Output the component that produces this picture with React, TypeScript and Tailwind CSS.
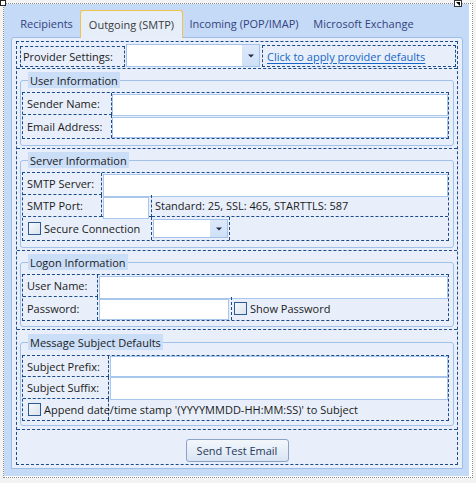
import type { ReactNode } from 'react'

// designer-style dashed outline used by the layout panels
const DASH = 'border-dashed border-[#1d4b88]'

function TextBox({ className = '' }: { className?: string }) {
  return <div className={`bg-white border border-[#a9c6ec] ${className}`} />
}

function Combo({ className = '' }: { className?: string }) {
  return (
    <div className={`flex bg-white border border-[#a3c1ea] ${className}`}>
      <div className="ml-auto w-[17px] h-full bg-gradient-to-b from-[#dde9f9] to-[#cfe0f6] flex items-center justify-center">
        <svg width="6" height="4" viewBox="0 0 6 4">
          <path d="M0 0.5h6L3 3.5z" fill="#1e2d4d" />
        </svg>
      </div>
    </div>
  )
}

function CheckBox() {
  return (
    <span className="inline-block w-[13px] h-[13px] shrink-0 border border-[#2c5a93] bg-gradient-to-br from-[#f6f8fb] to-[#dbe3ee]" />
  )
}

function Label({ children, className = '' }: { children: ReactNode; className?: string }) {
  return (
    <div className={`flex items-center pl-[4px] whitespace-nowrap ${DASH} ${className}`}>{children}</div>
  )
}

function Group({
  title,
  top,
  height,
  children,
}: {
  title: string
  top: string
  height: string
  children: ReactNode
}) {
  return (
    <div className={`relative ml-[3px] w-[434px] border border-[#a2c1e9] rounded-[3px] ${top} ${height}`}>
      <div className="absolute left-[7px] top-[-9px] h-[16px] px-[2px] flex items-center bg-[#cbdef8] whitespace-nowrap">
        {title}
      </div>
      {children}
    </div>
  )
}

const TABS = [
  { label: 'Recipients', w: 'w-[67px]' },
  { label: 'Outgoing (SMTP)', w: 'w-[103px]', active: true },
  { label: 'Incoming (POP/IMAP)', w: 'w-[122px]' },
  { label: 'Microsoft Exchange', w: 'w-[117px]' },
]

export default function App() {
  return (
    <div className="relative w-[476px] h-[483px] bg-[#f3f3f3] font-['Open_Sans',sans-serif] text-[11px] leading-[15px] text-[#1b1b1b] overflow-hidden">
      {/* selection handle and smart-tag glyph */}
      <div className="absolute left-0 top-0 w-[6px] h-[6px] bg-white border border-[#222] z-20" />
      <div className="absolute left-[454px] top-0 w-[8px] h-[7px] bg-white border border-[#333] z-20 flex items-center justify-center">
        <svg width="4" height="4" viewBox="0 0 4 4">
          <path d="M0 0h4v4z" fill="#000" />
        </svg>
      </div>

      <div className="ml-[3px] mt-[3px] w-[470px] h-[475px] border border-dotted border-[#8a8a8a] bg-white">
        <div className="w-[465px] h-[472px] bg-[#c4daf7] pl-[7px] pt-[6px]">
          {/* tab strip */}
          <div className="flex items-end h-[27px] pl-[2px]">
            {TABS.map((t) =>
              t.active ? (
                <div
                  key={t.label}
                  className={`${t.w} h-[28px] -mb-px relative z-10 flex items-center justify-center rounded-t-[3px] border border-b-0 border-[#f0c24e] bg-[#e6eefa] text-[#3a3a3a]`}
                >
                  {t.label}
                </div>
              ) : (
                <div key={t.label} className={`${t.w} h-[27px] flex items-center justify-center text-[#34427e]`}>
                  {t.label}
                </div>
              ),
            )}
          </div>

          {/* tab page */}
          <div className="w-[452px] h-[432px] border border-[#9dbde7] rounded-t-[3px] bg-[#e8effa] pl-[4px] pt-[3px]">
            <div className={`w-[442px] h-[424px] border ${DASH} flex flex-col`}>
              {/* provider row */}
              <div className="h-[26px] flex items-end pl-[3px] pb-[1px]">
                <div className={`w-[105px] h-[21px] border ${DASH} flex items-center pl-[2px] whitespace-nowrap`}>
                  Provider Settings:
                </div>
                <Combo className="ml-px w-[134px] h-[23px]" />
                <div className={`ml-[2px] w-[194px] h-[22px] border ${DASH} flex items-center pl-[4px]`}>
                  <span className="text-[#1467c9] underline underline-offset-[2px] whitespace-nowrap">
                    Click to apply provider defaults
                  </span>
                </div>
              </div>

              {/* user information */}
              <div className={`h-[80px] border-t ${DASH}`}>
                <Group title="User Information" top="mt-[11px]" height="h-[66px]">
                  <div className={`ml-px mt-[11px] w-[427px] h-[47px] border ${DASH} grid grid-cols-[89px_336px] grid-rows-[22px_23px]`}>
                    <Label className="border-r border-b">Sender Name:</Label>
                    <div>
                      <TextBox className="mt-px h-[22px]" />
                    </div>
                    <Label className="border-r">Email Address:</Label>
                    <div>
                      <TextBox className="mt-[2px] h-[21px]" />
                    </div>
                  </div>
                </Group>
              </div>

              {/* server information */}
              <div className={`h-[102px] border-t ${DASH}`}>
                <Group title="Server Information" top="mt-[11px]" height="h-[88px]">
                  <div className={`ml-px mt-[11px] w-[427px] h-[69px] border ${DASH} grid grid-cols-[79px_50px_78px_218px] grid-rows-[22px_22px_23px]`}>
                    <Label className="border-r border-b">SMTP Server:</Label>
                    <div className="col-span-3">
                      <TextBox className="ml-px mt-px w-[345px] h-[23px]" />
                    </div>
                    <Label className="border-r border-b">SMTP Port:</Label>
                    <div className={`border-r border-b ${DASH}`}>
                      <TextBox className="ml-px mt-[2px] w-[46px] h-[22px]" />
                    </div>
                    <div className={`col-span-2 border-b ${DASH} flex items-center pl-[3px] whitespace-nowrap`}>
                      Standard: 25, SSL: 465, STARTTLS: 587
                    </div>
                    <div className={`col-span-2 border-r ${DASH} flex items-center gap-[3px] pl-[5px] whitespace-nowrap`}>
                      <CheckBox />
                      Secure Connection
                    </div>
                    <div className={`border-r ${DASH}`}>
                      <Combo className="ml-px mt-[2px] w-[75px] h-[19px]" />
                    </div>
                    <div />
                  </div>
                </Group>
              </div>

              {/* logon information */}
              <div className={`h-[79px] border-t ${DASH}`}>
                <Group title="Logon Information" top="mt-[11px]" height="h-[65px]">
                  <div className={`ml-px mt-[11px] w-[427px] h-[47px] border ${DASH} grid grid-cols-[75px_134px_216px] grid-rows-[22px_23px]`}>
                    <Label className="border-r border-b">User Name:</Label>
                    <div className="col-span-2">
                      <TextBox className="ml-px mt-px w-[349px] h-[23px]" />
                    </div>
                    <Label className="border-r">Password:</Label>
                    <div className={`border-r ${DASH}`}>
                      <TextBox className="ml-px mt-[2px] w-[130px] h-[21px]" />
                    </div>
                    <div className="flex items-center gap-[3px] pl-[2px] whitespace-nowrap">
                      <CheckBox />
                      Show Password
                    </div>
                  </div>
                </Group>
              </div>

              {/* message subject defaults */}
              <div className={`h-[100px] border-t ${DASH}`}>
                <Group title="Message Subject Defaults" top="mt-[12px]" height="h-[84px]">
                  <div className={`ml-px mt-[12px] w-[427px] h-[66px] border ${DASH} grid grid-cols-[86px_339px] grid-rows-[21px_22px_21px]`}>
                    <Label className="border-r border-b">Subject Prefix:</Label>
                    <div>
                      <TextBox className="ml-px w-[338px] h-[21px]" />
                    </div>
                    <Label className="border-r border-b">Subject Suffix:</Label>
                    <div>
                      <TextBox className="ml-px w-[338px] h-[23px]" />
                    </div>
                    <div className={`border-r ${DASH} flex items-center gap-[3px] pl-[5px] whitespace-nowrap`}>
                      <CheckBox />
                      Append date/time stamp '(YYYYMMDD-HH:MM:SS)' to Subject
                    </div>
                    <div />
                  </div>
                </Group>
              </div>

              {/* action row */}
              <div className={`flex-1 border-t ${DASH} flex justify-center pt-[9px]`}>
                <button className="w-[103px] h-[23px] rounded-[3px] border border-[#8aa4c8] bg-gradient-to-b from-[#f3f7fc] to-[#d9e4f2] text-[#1e395b] leading-none">
                  Send Test Email
                </button>
              </div>
            </div>
          </div>
        </div>
      </div>
    </div>
  )
}
